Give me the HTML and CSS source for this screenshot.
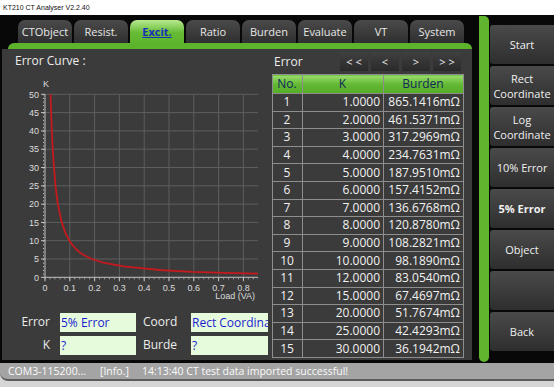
FILE: index.html
```html
<!DOCTYPE html>
<html lang="en">
<head>
    <meta charset="UTF-8">
    <title>KT210 CT Analyser V2.2.40</title>
    <link rel="stylesheet" href="styles.css">
</head>
<body>

    <div class="titlebar">KT210 CT Analyser V2.2.40</div>

    <div class="app">
        <div class="main">
            <div class="tabs">
                <div class="tab">CTObject</div>
                <div class="tab">Resist.</div>
                <div class="tab active">Excit.</div>
                <div class="tab">Ratio</div>
                <div class="tab">Burden</div>
                <div class="tab">Evaluate</div>
                <div class="tab">VT</div>
                <div class="tab">System</div>
            </div>
            <div class="tabline"></div>

            <div class="panel">
                <div class="curve-side">
                    <div class="caption">Error Curve :</div>

                    <svg class="chart" viewBox="10 72 256 230" width="256" height="230">
                        <!-- grid -->
                        <path class="grid" d="M45 259h213M45 240.7h213M45 222.4h213M45 204.1h213M45 185.8h213M45 167.5h213M45 149.2h213M45 130.9h213M45 112.6h213M45 94.3h213
                            M69.8 94.3V277.3M94.6 94.3V277.3M119.4 94.3V277.3M144.2 94.3V277.3M169 94.3V277.3M193.8 94.3V277.3M218.6 94.3V277.3M243.4 94.3V277.3"/>
                        <!-- axes and ticks -->
                        <line class="axis" x1="45" y1="94.3" x2="45" y2="277.3"/>
                        <line class="axis" x1="45" y1="277.3" x2="258" y2="277.3"/>
                        <line class="minor" x1="43.5" y1="94.3" x2="43.5" y2="278" stroke-dasharray="1 2.66"/>
                        <line class="minor" x1="44.5" y1="278.8" x2="258" y2="278.8" stroke-dasharray="1 3.96"/>
                        <path class="axis" d="M41 277.3h4M41 259h4M41 240.7h4M41 222.4h4M41 204.1h4M41 185.8h4M41 167.5h4M41 149.2h4M41 130.9h4M41 112.6h4M41 94.3h4
                            M45 277.3v4M69.8 277.3v4M94.6 277.3v4M119.4 277.3v4M144.2 277.3v4M169 277.3v4M193.8 277.3v4M218.6 277.3v4M243.4 277.3v4"/>
                        <!-- labels -->
                        <text class="lbl" x="43" y="87">K</text>
                        <g class="ylbl">
                            <text x="39" y="97.5">50</text>
                            <text x="39" y="115.8">45</text>
                            <text x="39" y="134.1">40</text>
                            <text x="39" y="152.4">35</text>
                            <text x="39" y="170.7">30</text>
                            <text x="39" y="189">25</text>
                            <text x="39" y="207.3">20</text>
                            <text x="39" y="225.6">15</text>
                            <text x="39" y="243.9">10</text>
                            <text x="39" y="262.2">5</text>
                            <text x="39" y="280.5">0</text>
                        </g>
                        <g class="xlbl">
                            <text x="45" y="290.5">0</text>
                            <text x="69.8" y="290.5">0.1</text>
                            <text x="94.6" y="290.5">0.2</text>
                            <text x="119.4" y="290.5">0.3</text>
                            <text x="144.2" y="290.5">0.4</text>
                            <text x="169" y="290.5">0.5</text>
                            <text x="193.8" y="290.5">0.6</text>
                            <text x="218.6" y="290.5">0.7</text>
                            <text x="243.4" y="290.5">0.8</text>
                        </g>
                        <text class="lbl unit" x="255" y="299">Load (VA)</text>
                        <!-- error curve -->
                        <polyline class="curve" points="50.5,94.3 51.1,112.6 51.8,130.9 52.7,149.2 54,167.5 55.5,185.8 57.8,204.1 61.7,222.4 65.6,233.4 69.4,240.7 71.9,244.4 75,248 78.9,251.7 84,255.3 91.6,259 103.2,262.7 123.6,266.3 159.5,270 191.8,271.8 225.9,272.9 258,273.6"/>
                    </svg>

                    <div class="fields">
                        <div class="flabel">Error</div>
                        <div class="fbox">5% Error</div>
                        <div class="flabel second">Coord</div>
                        <div class="fbox">Rect Coordina</div>
                        <div class="flabel">K</div>
                        <div class="fbox">?</div>
                        <div class="flabel second">Burde</div>
                        <div class="fbox">?</div>
                    </div>
                </div>

                <div class="table-side">
                    <div class="table-top">
                        <div class="caption">Error</div>
                        <div class="pager">
                            <div class="pgbtn">&lt; &lt;</div>
                            <div class="pgbtn">&lt;</div>
                            <div class="pgbtn">&gt;</div>
                            <div class="pgbtn">&gt; &gt;</div>
                        </div>
                    </div>

                    <table class="data">
                        <colgroup>
                            <col class="c-no">
                            <col class="c-k">
                            <col class="c-b">
                        </colgroup>
                        <tr><th>No.</th><th>K</th><th>Burden</th></tr>
                        <tr><td>1</td><td>1.0000</td><td>865.1416mΩ</td></tr>
                        <tr><td>2</td><td>2.0000</td><td>461.5371mΩ</td></tr>
                        <tr><td>3</td><td>3.0000</td><td>317.2969mΩ</td></tr>
                        <tr><td>4</td><td>4.0000</td><td>234.7631mΩ</td></tr>
                        <tr><td>5</td><td>5.0000</td><td>187.9510mΩ</td></tr>
                        <tr><td>6</td><td>6.0000</td><td>157.4152mΩ</td></tr>
                        <tr><td>7</td><td>7.0000</td><td>136.6768mΩ</td></tr>
                        <tr><td>8</td><td>8.0000</td><td>120.8780mΩ</td></tr>
                        <tr><td>9</td><td>9.0000</td><td>108.2821mΩ</td></tr>
                        <tr><td>10</td><td>10.0000</td><td>98.1890mΩ</td></tr>
                        <tr><td>11</td><td>12.0000</td><td>83.0540mΩ</td></tr>
                        <tr><td>12</td><td>15.0000</td><td>67.4697mΩ</td></tr>
                        <tr><td>13</td><td>20.0000</td><td>51.7674mΩ</td></tr>
                        <tr><td>14</td><td>25.0000</td><td>42.4293mΩ</td></tr>
                        <tr><td>15</td><td>30.0000</td><td>36.1942mΩ</td></tr>
                    </table>
                </div>
            </div>
        </div>

        <div class="rail"></div>

        <div class="side">
            <div class="sbtn">Start</div>
            <div class="sbtn">Rect<br>Coordinate</div>
            <div class="sbtn">Log<br>Coordinate</div>
            <div class="sbtn">10% Error</div>
            <div class="sbtn selected">5% Error</div>
            <div class="sbtn">Object</div>
            <div class="sbtn"></div>
            <div class="sbtn">Back</div>
        </div>
    </div>

    <div class="statusbar">
        <span class="port">COM3-115200...</span>
        <span class="level">[Info.]</span>
        <span>14:13:40 CT test data imported successful!</span>
    </div>

</body>
</html>
```

FILE: styles.css
```css
body {
    margin: 0;
    width: 554px;
    height: 387px;
    overflow: hidden;
    background-color: #d6d6d6;
    font-family: "Open Sans", "Noto Sans", sans-serif;
}

.titlebar {
    height: 15px;
    padding-left: 3px;
    background: #fff;
    color: #111;
    font-family: "Liberation Sans", sans-serif;
    font-size: 7px;
    line-height: 16px;
}

.app {
    display: flex;
    height: 348px;
    background: #080808;
}

.main {
    width: 472px;
    display: flex;
    flex-direction: column;
}

.tabs {
    display: flex;
    gap: 2px;
    height: 23px;
    padding: 5px 0 0 18px;
}

.tab {
    width: 54px;
    height: 23px;
    border-radius: 7px 7px 0 0;
    background: linear-gradient(#4a4a4a, #2f2f2f);
    color: #e6e6e6;
    font-size: 11px;
    line-height: 23px;
    text-align: center;
}

.tab.active {
    background: linear-gradient(#b8ea90, #66bb36 55%, #5db42c);
    color: #1a2db8;
    font-weight: bold;
    text-decoration: underline;
}

.tabline {
    height: 6px;
    margin-left: 8px;
    background: #5db42c;
    border-radius: 6px 6px 0 0;
}

.panel {
    display: flex;
    height: 311px;
    margin-left: 2px;
    background: #3b3b3b;
}

.caption {
    color: #ececec;
    font-size: 12px;
    line-height: 16px;
}

.curve-side {
    width: 270px;
}

.curve-side .caption {
    padding: 4px 0 0 13px;
}

.chart {
    display: block;
    margin: 3px 0 0 8px;
}

.chart .grid {
    fill: none;
    stroke: #5e5e5e;
    stroke-width: 1;
}

.chart .axis {
    fill: none;
    stroke: #c4c4c4;
    stroke-width: 1;
}

.chart .minor {
    stroke: #c4c4c4;
    stroke-width: 1;
}

.chart text {
    font-family: "Liberation Sans", sans-serif;
    font-size: 9px;
    fill: #dcdcdc;
}

.chart .ylbl text,
.chart .unit {
    text-anchor: end;
}

.chart .xlbl text {
    text-anchor: middle;
}

.chart .curve {
    fill: none;
    stroke: #c41a1e;
    stroke-width: 1.8;
    stroke-linejoin: round;
}

.fields {
    display: grid;
    grid-template-columns: 58px 76px 55px 77px;
    grid-template-rows: 19px 19px;
    row-gap: 4px;
    margin-top: 11px;
}

.flabel {
    padding-right: 10px;
    color: #ececec;
    font-size: 12px;
    line-height: 17px;
    text-align: right;
}

.flabel.second {
    padding: 0 0 0 7px;
    text-align: left;
}

.fbox {
    overflow: hidden;
    padding-left: 1px;
    background: #e6fbdc;
    color: #1b1bd0;
    font-size: 12px;
    line-height: 20px;
    white-space: nowrap;
}

.table-side {
    width: 191px;
    padding-top: 3px;
}

.table-top {
    display: flex;
    align-items: center;
    height: 19px;
    margin-bottom: 3px;
}

.table-top .caption {
    width: 66px;
    padding-left: 2px;
}

.pager {
    display: flex;
    gap: 3px;
}

.pgbtn {
    width: 28px;
    height: 19px;
    background: linear-gradient(#404040, #2a2a2a);
    color: #eee;
    font-size: 11px;
    line-height: 19px;
    text-align: center;
}

.data {
    width: 191px;
    border-collapse: collapse;
    table-layout: fixed;
    color: #f2f2f2;
    font-size: 12px;
}

.c-no { width: 30px; }
.c-k { width: 81px; }
.c-b { width: 80px; }

.data th,
.data td {
    border: 1px solid #8e8e8e;
    padding: 0 3px 0 2px;
    white-space: nowrap;
}

.data th {
    height: 18px;
    background: linear-gradient(#9ade6c, #62b834 50%, #56ad28);
    color: #14285a;
    font-size: 12px;
    font-weight: normal;
    line-height: 18px;
    text-align: center;
}

.data td {
    height: 16.6px;
    line-height: 16px;
    text-align: right;
}

.data td:first-child {
    text-align: center;
}

.rail {
    width: 10px;
    margin: 1px 1px 1px 7px;
    background: #5fb52e;
    border-radius: 0 5px 5px 5px;
}

.side {
    display: flex;
    flex-direction: column;
    gap: 2px;
    width: 64px;
    padding-top: 10px;
}

.sbtn {
    display: flex;
    align-items: center;
    justify-content: center;
    height: 39px;
    border-radius: 3px 0 0 3px;
    background: linear-gradient(#4a4a4a, #2e2e2e);
    color: #f0f0f0;
    font-size: 11px;
    line-height: 15px;
    text-align: center;
}

.sbtn.selected {
    font-weight: bold;
}

.statusbar {
    display: flex;
    height: 16px;
    padding-left: 8px;
    border-radius: 0 0 0 8px;
    border-bottom: 2px solid #5c5c5c;
    background: #a4a4a4;
    color: #fafafa;
    font-size: 10.5px;
    line-height: 16px;
}

.statusbar .port {
    width: 92px;
}

.statusbar .level {
    width: 42px;
}
```
